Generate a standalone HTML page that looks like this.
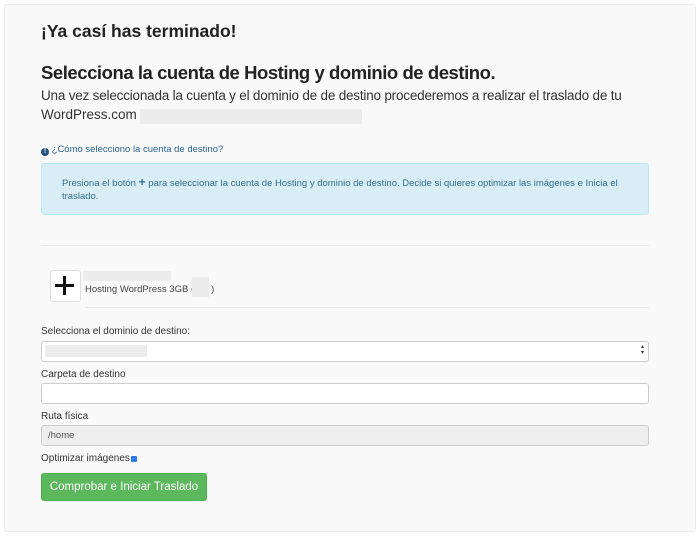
<!DOCTYPE html>
<html><head><meta charset="utf-8"><style>
body{margin:0;width:700px;height:536px;background:#fff;font-family:"Liberation Sans",sans-serif;position:relative;overflow:hidden}
.a{position:absolute;white-space:nowrap}
.panel{position:absolute;left:4px;top:4px;width:690px;height:526px;background:#f9f9f9;border:1px solid #ececec;border-radius:3px}
.g{position:absolute;background:#ececec}
.lbl{font-size:10px;color:#333}
.inp{position:absolute;left:41px;width:606px;height:19px;background:#fff;border:1px solid #ccc;border-radius:3px}
</style></head><body>
<div class="panel"></div>
<div class="a" style="left:41px;top:21px;font-size:17.5px;font-weight:bold;color:#222">¡Ya casí has terminado!</div>
<div class="a" style="left:41px;top:62px;font-size:18.5px;font-weight:bold;color:#222;letter-spacing:-0.45px">Selecciona la cuenta de Hosting y dominio de destino.</div>
<div class="a" style="left:41px;top:88px;font-size:13.5px;color:#333;letter-spacing:-0.2px">Una vez seleccionada la cuenta y el dominio de de destino procederemos a realizar el traslado de tu</div>
<div class="a" style="left:41px;top:107px;font-size:13.5px;color:#333">WordPress.com</div>
<div class="g" style="left:140px;top:109px;width:222px;height:15px"></div>
<div class="a" style="left:41px;top:144px;font-size:9.5px;color:#2a6496"><span style="display:inline-block;width:8px;height:8px;border-radius:50%;background:#1f4f7a;color:#fff;font-size:7px;line-height:8px;text-align:center;font-weight:bold;vertical-align:-1px">!</span> ¿Cómo selecciono la cuenta de destino?</div>
<div style="position:absolute;left:41px;top:163px;width:606px;height:50px;background:#d9edf7;border:1px solid #bce8f1;border-radius:3px"></div>
<div class="a" style="left:62px;top:176px;font-size:9.5px;color:#31708f;line-height:13px">Presiona el botón <b style="font-size:12px">+</b> para seleccionar la cuenta de Hosting y dominio de destino. Decide si quieres optimizar las imágenes e Inicia el<br>traslado.</div>
<div style="position:absolute;left:41px;top:245px;width:608px;height:1px;background:#eaeaea"></div>
<div style="position:absolute;left:50px;top:270px;width:29px;height:30px;background:#fff;border:1px solid #ddd;border-radius:3px"></div>
<div style="position:absolute;left:55px;top:284px;width:19px;height:3px;background:#111"></div>
<div style="position:absolute;left:63px;top:276px;width:3px;height:19px;background:#111"></div>
<div class="g" style="left:83px;top:271px;width:88px;height:10px"></div>
<div class="a" style="left:85px;top:284px;font-size:9.5px;color:#444">Hosting WordPress 3GB (<span style="display:inline-block;width:17px"></span>)</div>
<div class="g" style="left:192px;top:277px;width:17px;height:20px"></div>
<div style="position:absolute;left:85px;top:307px;width:564px;height:1px;background:#eaeaea"></div>
<div class="a lbl" style="left:41px;top:326px">Selecciona el dominio de destino:</div>
<div class="inp" style="top:341px"></div>
<div class="g" style="left:45px;top:345px;width:102px;height:12px"></div>
<div class="a" style="left:641px;top:344px;font-size:6px;line-height:6px;color:#333">▴<br>▾</div>
<div class="a lbl" style="left:41px;top:369px">Carpeta de destino</div>
<div class="inp" style="top:383px"></div>
<div class="a lbl" style="left:41px;top:411px">Ruta física</div>
<div class="inp" style="top:425px;background:#eee"></div>
<div class="a" style="left:48px;top:430px;font-size:9.5px;color:#555">/home</div>
<div class="a lbl" style="left:41px;top:453px">Optimizar imágenes</div>
<div style="position:absolute;left:131px;top:456px;width:6px;height:6px;background:#2e7bf0;border-radius:1px"></div>
<div style="position:absolute;left:41px;top:473px;width:164px;height:26px;background:#5cb85c;border:1px solid #4cae4c;border-radius:3px;color:#fff;font-size:11.5px;line-height:26px;text-align:center">Comprobar e Iniciar Traslado</div>
</body></html>
